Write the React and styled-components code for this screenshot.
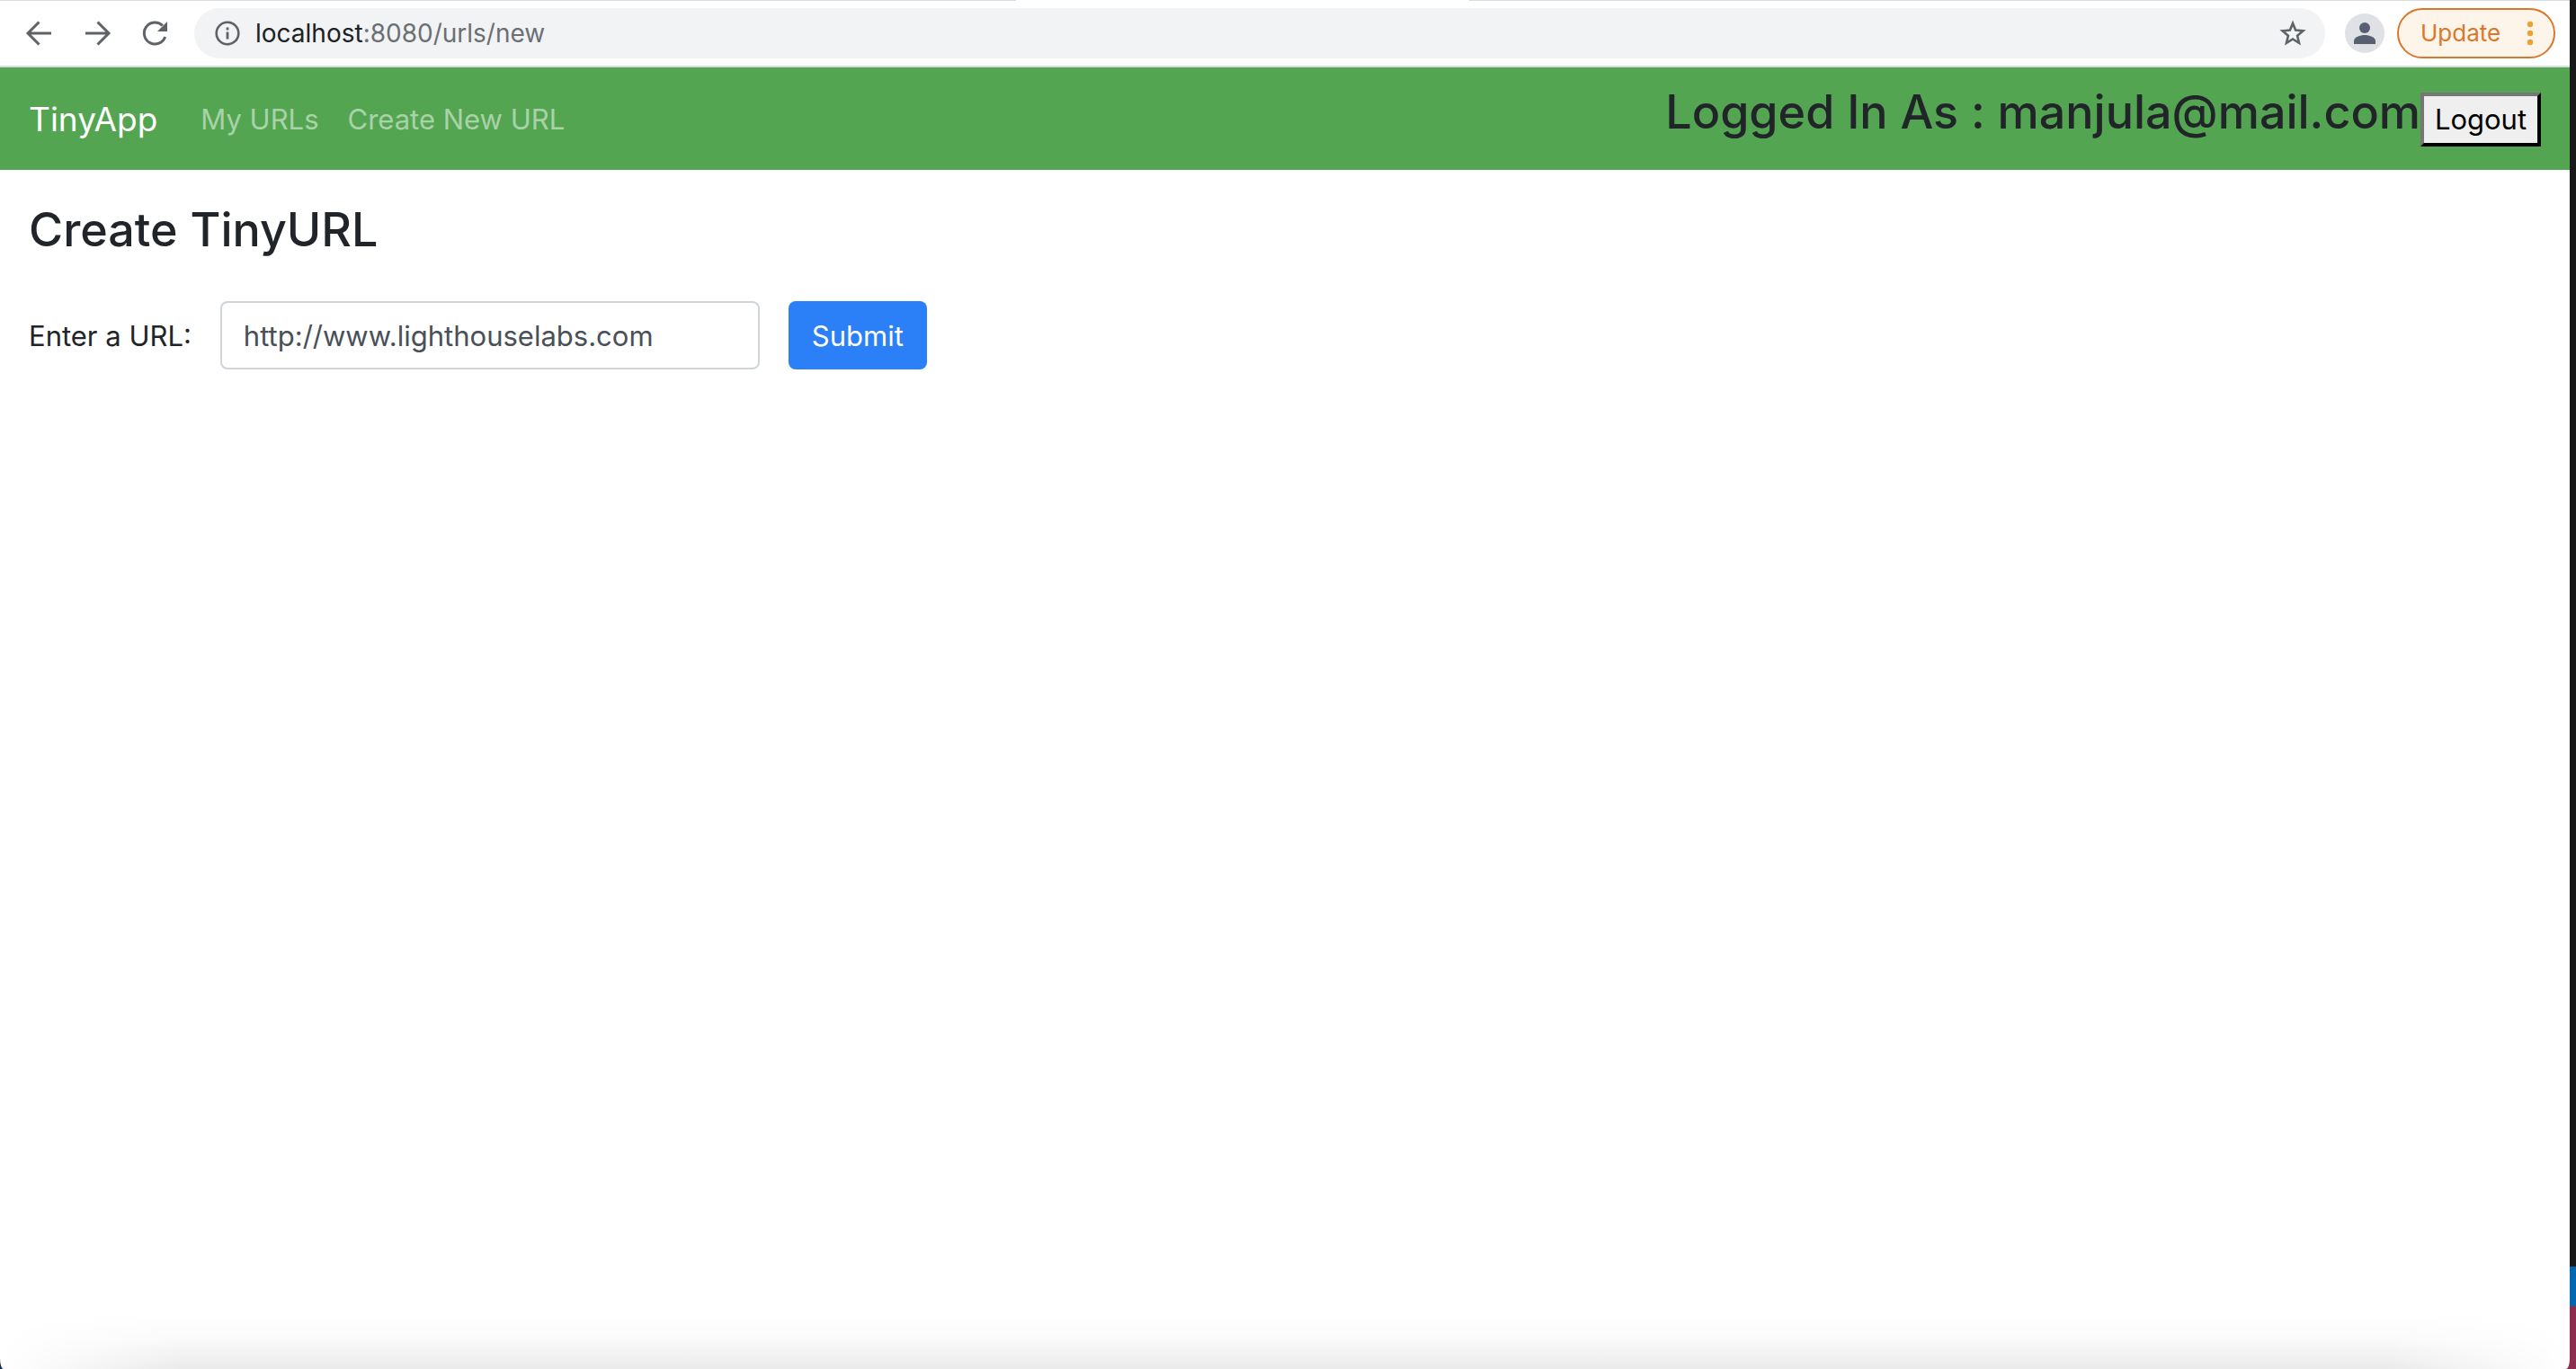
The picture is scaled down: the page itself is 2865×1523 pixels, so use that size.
import React from "react";
import styled, { createGlobalStyle } from "styled-components";

const GlobalStyle = createGlobalStyle`
  *, *::before, *::after { box-sizing: border-box; }
  body {
    margin: 0;
    background: #191919;
    color: #212529;
    font-family: Inter, Roboto, "Liberation Sans", sans-serif;
    font-size: 31px;
    line-height: 48px;
  }
  button, input { font: inherit; margin: 0; }
`;

const Desktop = styled.div`
  display: flex;
  min-height: 100vh;
  background: linear-gradient(to right, #1b2f52 50%, #8f2d51 50%);
`;

const Window = styled.div`
  flex: 1;
  min-width: 0;
  display: flex;
  flex-direction: column;
  background: #fff;
  border-radius: 0 0 4px 4px / 0 0 12px 12px;
  overflow: hidden;
`;

const Backdrop = styled.div`
  width: 7px;
  display: flex;
  flex-direction: column;
`;

const Band = styled.div`
  flex: ${(p) => (p.$height ? `0 0 ${p.$height}px` : "1")};
  background: ${(p) => p.$color};
`;

const TabEdge = styled.div`
  display: flex;
  justify-content: space-between;
  height: 1px;
  background: #fff;
  &::before { content: ""; width: 1130px; background: #dadce0; }
  &::after { content: ""; width: 1224px; background: #dadce0; }
`;

const Toolbar = styled.header`
  display: flex;
  align-items: center;
  height: 74px;
  padding: 8px 16px 8px 28px;
  border-bottom: 2px solid #dadce0;
`;

const Tools = styled.div`
  display: flex;
  gap: 32px;
  margin-right: 28px;
`;

const IconButton = styled.button`
  display: flex;
  padding: 0;
  border: 0;
  background: none;
  color: #5f6368;
`;

const AddressBar = styled.div`
  flex: 1;
  display: flex;
  align-items: center;
  gap: 15px;
  height: 56px;
  padding: 0 20px 0 21px;
  border-radius: 28px;
  background: #f1f3f4;
  color: #5f6368;
`;

const Address = styled.div`
  flex: 1;
  font-size: 28px;
  line-height: 40px;
  color: #6b6f74;
`;

const Host = styled.span`
  color: #202124;
`;

const Avatar = styled.button`
  display: flex;
  width: 44px;
  height: 44px;
  margin: 0 14px 0 22px;
  padding: 0;
  border: 0;
  border-radius: 50%;
  background: #dfe1e5;
`;

const Update = styled.button`
  display: flex;
  align-items: center;
  justify-content: space-between;
  width: 176px;
  height: 56px;
  padding: 0 20px 0 24px;
  border: 2px solid #d9782d;
  border-radius: 28px;
  background: #fdf4ea;
  color: #d9782d;
  font-size: 26px;
  line-height: 40px;
`;

const Navbar = styled.nav`
  display: flex;
  align-items: center;
  padding: 17px 32px 15px;
  background: #53a551;
`;

const Brand = styled.a`
  margin-right: 32px;
  color: #fff;
  font-size: 37px;
  text-decoration: none;
`;

const NavLinks = styled.div`
  flex: 1;
  display: flex;
`;

const NavLink = styled.a`
  padding: 0 16px;
  color: rgba(255, 255, 255, 0.5);
  text-decoration: none;
`;

const Heading = styled.h3`
  margin: 0 0 ${(p) => p.$after}px;
  font-size: 52px;
  line-height: 66px;
  font-weight: 500;
`;

const Logout = styled.button`
  height: 60px;
  width: 134px;
  padding: 0;
  border: 4px outset #767676;
  border-color: #767676 #212121 #212121 #767676;
  background: #efefef;
  color: #000;
  text-align: center;
`;

const Main = styled.main`
  flex: 1;
  padding: 34px 32px;
`;

const Form = styled.form`
  display: flex;
  align-items: center;
  gap: 32px;
`;

const Label = styled.label`
  padding-top: 2px;
`;

const UrlInput = styled.input`
  width: 600px;
  height: 76px;
  padding: 12px 24px;
  border: 2px solid #ced4da;
  border-radius: 8px;
  background: #fff;
  color: #495057;
  &::placeholder { color: #495057; opacity: 1; }
`;

const Submit = styled.button`
  width: 154px;
  height: 76px;
  padding: 2px 0 0;
  border: 0;
  border-radius: 8px;
  background: #2b7ff7;
  color: #fff;
`;

const Shade = styled.div`
  height: 60px;
  background: linear-gradient(#fff, #fafafa 45%, #ebebeb);
  mask-image: linear-gradient(to right, transparent, #000 200px, #000 calc(100% - 200px), transparent);
`;

function Arrow({ flip }) {
  return (
    <svg width="32" height="32" viewBox="0 0 32 32" fill="none" stroke="currentColor" strokeWidth="3">
      <path d={flip ? "M3 16H28M16.500 3.500L29 16L16.500 28.500" : "M29 16H4M15.500 3.500L3 16L15.500 28.500"} />
    </svg>
  );
}

export default function App() {
  return (
    <>
      <GlobalStyle />
      <Desktop>
        <Window>
          <TabEdge />
          <Toolbar>
            <Tools>
              <IconButton aria-label="Back"><Arrow /></IconButton>
              <IconButton aria-label="Forward"><Arrow flip /></IconButton>
              <IconButton aria-label="Reload">
                <svg width="32" height="32" viewBox="0 0 32 32" fill="none">
                  <path d="M27.700 20A12 12 0 1 1 24.800 7.500" stroke="currentColor" strokeWidth="3" />
                  <path d="M30 3V14H19Z" fill="currentColor" />
                </svg>
              </IconButton>
            </Tools>
            <AddressBar>
              <svg width="32" height="32" viewBox="0 0 32 32" fill="none">
                <circle cx="16" cy="16" r="12.300" stroke="currentColor" strokeWidth="2.600" />
                <path d="M16 14.500V22.500M16 9.500V12.500" stroke="currentColor" strokeWidth="2.800" />
              </svg>
              <Address><Host>localhost</Host>:8080/urls/new</Address>
              <IconButton aria-label="Bookmark this page">
                <svg width="32" height="32" viewBox="0 0 32 32" fill="none" stroke="currentColor" strokeWidth="2.600">
                  <path d="M16 5L19.100 12.600L27.400 13.300L21.100 18.700L23 26.800L16 22.500L9 26.800L10.900 18.700L4.600 13.300L12.900 12.600Z" />
                </svg>
              </IconButton>
            </AddressBar>
            <Avatar aria-label="Profile">
              <svg width="44" height="44" viewBox="0 0 44 44" fill="#576071">
                <circle cx="22" cy="16" r="6" />
                <path d="M10 34V30.500C10 26.200 17 24 22 24S34 26.200 34 30.500V34Z" />
              </svg>
            </Avatar>
            <Update>
              Update
              <svg width="12" height="32" viewBox="0 0 12 32" fill="#eba133">
                <circle cx="6" cy="6" r="3.200" />
                <circle cx="6" cy="16" r="3.200" />
                <circle cx="6" cy="26" r="3.200" />
              </svg>
            </Update>
          </Toolbar>
          <Navbar>
            <Brand href="#">TinyApp</Brand>
            <NavLinks>
              <NavLink href="#urls">My URLs</NavLink>
              <NavLink href="#new">Create New URL</NavLink>
            </NavLinks>
            <Heading $after={16}>Logged In As : manjula@mail.com</Heading>
            <Logout>Logout</Logout>
          </Navbar>
          <Main>
            <Heading $after={46}>Create TinyURL</Heading>
            <Form>
              <Label htmlFor="longURL">Enter a URL:</Label>
              <UrlInput id="longURL" type="text" placeholder="http://www.lighthouselabs.com" />
              <Submit type="button">Submit</Submit>
            </Form>
          </Main>
          <Shade />
        </Window>
        <Backdrop>
          <Band $color="#191919" />
          <Band $height={44} $color="#0067b0" />
          <Band $height={70} $color="#8f2d51" />
        </Backdrop>
      </Desktop>
    </>
  );
}
